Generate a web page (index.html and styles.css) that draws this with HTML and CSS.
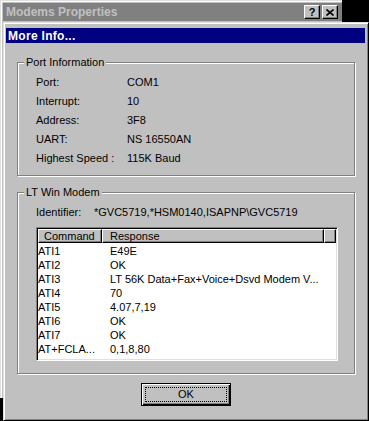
FILE: index.html
```html
<!DOCTYPE html>
<html lang="en">
<head>
    <meta charset="UTF-8">
    <title>More Info...</title>
    <link rel="stylesheet" href="styles.css">
</head>
<body>
    <div class="desk">
        <div class="win parent">
            <div class="caption inactive">
                <span class="caption-text">Modems Properties</span>
                <span class="caption-btns">
                    <span class="cbtn">?</span>
                    <span class="cbtn">
                        <svg width="8" height="7" viewBox="0 0 8 7"><path d="M0.5 0.5 L7.5 6.5 M7.5 0.5 L0.5 6.5" stroke="#000" stroke-width="1.6" fill="none"/></svg>
                    </span>
                </span>
            </div>
        </div>

        <div class="win dialog">
            <div class="caption active"><span class="caption-text">More Info...</span></div>
            <div class="content">
                <fieldset class="group port">
                    <legend>Port Information</legend>
                    <div class="group-body">
                        <div class="props">
                            <span>Port:</span><span>COM1</span>
                            <span>Interrupt:</span><span>10</span>
                            <span>Address:</span><span>3F8</span>
                            <span>UART:</span><span>NS 16550AN</span>
                            <span>Highest Speed :</span><span>115K Baud</span>
                        </div>
                    </div>
                </fieldset>

                <fieldset class="group modem">
                    <legend>LT Win Modem</legend>
                    <div class="group-body">
                        <div class="ident"><span>Identifier:</span><span>*GVC5719,*HSM0140,ISAPNP\GVC5719</span></div>
                        <div class="list">
                            <div class="list-head">
                                <span class="hcol cmd">Command</span>
                                <span class="hcol resp">Response</span>
                                <span class="hcol rest"></span>
                            </div>
                            <div class="rows">
                                <span>ATI1</span><span>E49E</span>
                                <span>ATI2</span><span>OK</span>
                                <span>ATI3</span><span>LT 56K Data+Fax+Voice+Dsvd Modem V...</span>
                                <span>ATI4</span><span>70</span>
                                <span>ATI5</span><span>4.07,7,19</span>
                                <span>ATI6</span><span>OK</span>
                                <span>ATI7</span><span>OK</span>
                                <span>AT+FCLA...</span><span>0,1,8,80</span>
                            </div>
                        </div>
                    </div>
                </fieldset>

                <div class="actions">
                    <button class="btn default"><span class="focus">OK</span></button>
                </div>
            </div>
        </div>
    </div>
</body>
</html>
```

FILE: styles.css
```css
* {
    box-sizing: border-box;
}
html, body {
    margin: 0;
    padding: 0;
}
body {
    background: #000;
    font-family: "Liberation Sans", Arial, sans-serif;
    font-size: 11px;
    color: #000;
}
.desk {
    position: relative;
    width: 369px;
    height: 421px;
    overflow: hidden;
}

/* windows on the desktop */
.win {
    position: absolute;
    background: #c0c0c0;
}
.parent {
    left: 0;
    top: 0;
    width: 342px;
    height: 398px;
    border-left: 1px solid #dfdfdf;
    border-top: 1px solid #dfdfdf;
    box-shadow: inset 1px 1px #fff;
    padding: 2px 0 0 2px;
}
.dialog {
    left: 3px;
    top: 22px;
    width: 366px;
    height: 399px;
    border: 1px solid;
    border-color: #dfdfdf #000 #000 #dfdfdf;
    box-shadow: inset 1px 1px #fff, inset -1px -1px #808080;
    padding: 5px 3px 0 2px;
}

/* title bars */
.caption {
    display: flex;
    align-items: center;
    font-size: 12px;
    font-weight: bold;
    white-space: nowrap;
}
.caption.inactive {
    height: 18px;
    background: #808080;
    color: #c0c0c0;
    padding: 0 4px 0 3px;
}
.caption.active {
    height: 15px;
    background: #000080;
    color: #fff;
    padding: 0 2px;
    letter-spacing: 0.3px;
}
.caption-btns {
    margin-left: auto;
    display: flex;
    gap: 2px;
}
.cbtn {
    width: 16px;
    height: 14px;
    display: flex;
    align-items: center;
    justify-content: center;
    background: #c0c0c0;
    color: #000;
    border: 1px solid;
    border-color: #fff #000 #000 #fff;
    box-shadow: inset -1px -1px #808080;
    font-size: 11px;
    font-weight: bold;
}

/* dialog body */
.content {
    padding: 0 10px 0 11px;
}
.group {
    margin: 13px 0 0;
    padding: 0;
    min-width: 0;
    border: 1px solid #808080;
    box-shadow: 1px 1px #fff, inset 1px 1px #fff;
}
.group.modem {
    margin-top: 10px;
}
.group legend {
    margin-left: 6px;
    padding: 0 2px;
    line-height: 13px;
    background: #c0c0c0;
}
.port .group-body {
    padding: 3px 16px 8px 18px;
}
.modem .group-body {
    padding: 6px 16px 12px 18px;
}
.props {
    display: grid;
    grid-template-columns: 91px auto;
    grid-auto-rows: 19px;
    align-items: center;
}
.ident {
    display: grid;
    grid-template-columns: 58px auto;
    height: 14px;
    line-height: 14px;
}

/* list view */
.list {
    margin-top: 8px;
    height: 134px;
    background: #fff;
    border: 1px solid;
    border-color: #808080 #fff #fff #808080;
    box-shadow: inset 1px 1px #000, inset -1px -1px #dfdfdf;
    padding: 1px;
}
.list-head {
    display: flex;
    height: 14px;
}
.hcol {
    background: #c0c0c0;
    border: 1px solid;
    border-color: #fff #000 #000 #fff;
    box-shadow: inset -1px -1px #808080;
    line-height: 12px;
    white-space: nowrap;
}
.hcol.cmd {
    width: 64px;
    padding-left: 5px;
}
.hcol.resp {
    width: 222px;
    padding-left: 7px;
}
.hcol.rest {
    flex: 1;
}
.rows {
    display: grid;
    grid-template-columns: 72px auto;
    grid-auto-rows: 14px;
    line-height: 14px;
    padding-top: 1px;
    white-space: nowrap;
}

/* push button */
.actions {
    display: flex;
    justify-content: center;
    margin-top: 9px;
}
.btn {
    width: 90px;
    height: 23px;
    padding: 3px;
    background: #c0c0c0;
    font: inherit;
    color: #000;
    border: 1px solid #000;
    box-shadow: inset 1px 1px #fff, inset -1px -1px #000, inset -2px -2px #808080;
}
.btn .focus {
    display: block;
    height: 100%;
    border: 1px dotted #000;
    line-height: 13px;
    text-align: center;
}
```
